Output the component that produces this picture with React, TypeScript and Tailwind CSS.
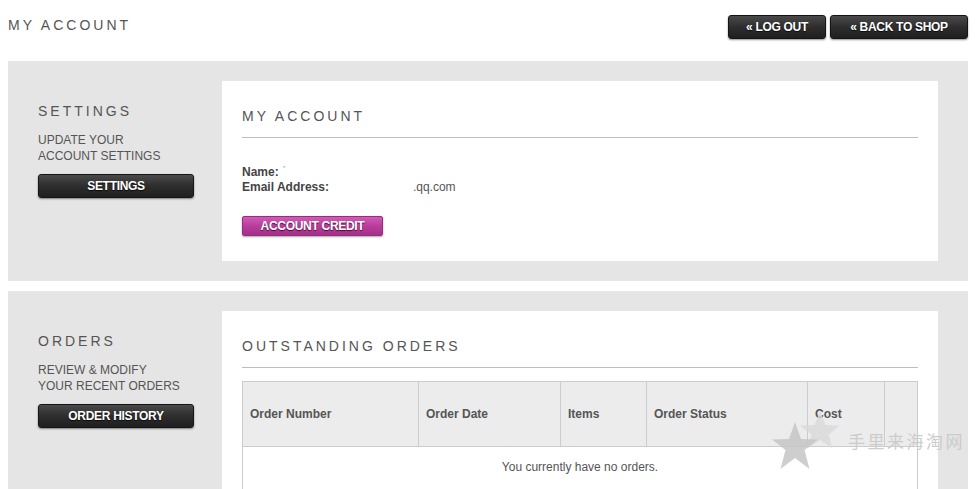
import React from "react";

const darkBtn =
  "h-[24px] flex items-center justify-center rounded-[3px] border border-[#151515] bg-gradient-to-b from-[#4a4a4a] via-[#2e2e2e] to-[#1f1f1f] shadow-[0_1px_2px_rgba(0,0,0,0.45)] text-white font-bold text-[12px] tracking-[-0.3px] [text-shadow:0_1px_1px_rgba(0,0,0,0.8)] [font-family:'Liberation_Sans',Arial,sans-serif]";

function SectionTitle({ children }: { children: React.ReactNode }) {
  return (
    <div className="text-[14px] leading-[16px] tracking-[3px] text-[#555]">
      {children}
    </div>
  );
}

function SideColumn({
  title,
  lines,
  button,
}: {
  title: string;
  lines: string[];
  button: string;
}) {
  return (
    <div className="w-[184px] shrink-0 pt-[22px]">
      <SectionTitle>{title}</SectionTitle>
      <div className="mt-[13px] text-[12px] leading-[16px] text-[#555]">
        {lines.map((l) => (
          <div key={l}>{l}</div>
        ))}
      </div>
      <button className={`${darkBtn} mt-[10px] w-[156px]`}>{button}</button>
    </div>
  );
}

function Watermark() {
  return (
    <div className="pointer-events-none absolute left-[770px] top-[408px] flex items-center">
      <svg width="76" height="70" viewBox="0 0 76 70">
        <polygon
          points="50,3 55.5,17 70,17.5 58.5,26.5 62.5,40.5 50,32 37.5,40.5 41.5,26.5 30,17.5 44.5,17"
          fill="#d9d9d9"
          opacity="0.8"
        />
        <polygon
          points="25,14 31,31 48,31.5 34.5,42 39.5,61 25,50 10.5,61 15.5,42 2,31.5 19,31"
          fill="#c6c6c6"
          opacity="0.85"
        />
      </svg>
      <span className="ml-[2px] -mt-[4px] text-[17px] tracking-[2.5px] text-[#cccccc] [font-family:'Noto_Sans_CJK_SC',serif]">
        手里来海淘网
      </span>
    </div>
  );
}

export default function App() {
  return (
    <div className="relative min-h-[489px] bg-white px-2 pt-[15px] text-[#444] [font-family:'Liberation_Sans',Arial,sans-serif]">
      {/* page header */}
      <div className="flex h-[46px] items-start justify-between">
        <div className="mt-[2px] text-[14px] leading-[16px] tracking-[3px] text-[#555]">
          MY ACCOUNT
        </div>
        <div className="flex gap-[4px]">
          <button className={`${darkBtn} w-[98px]`}>« LOG OUT</button>
          <button className={`${darkBtn} w-[138px]`}>« BACK TO SHOP</button>
        </div>
      </div>

      {/* settings panel */}
      <section className="flex bg-[#e5e5e5] px-[30px] py-5">
        <SideColumn
          title="SETTINGS"
          lines={["UPDATE YOUR", "ACCOUNT SETTINGS"]}
          button="SETTINGS"
        />
        <div className="flex-1 bg-white px-5 pb-[25px] pt-[27px]">
          <SectionTitle>MY ACCOUNT</SectionTitle>
          <div className="mt-[13px] h-px bg-[#bdbdbd]" />
          <div className="mt-[27px] text-[12px] leading-[15px] text-[#444]">
            <div>
              <span className="font-bold">Name:</span>{" "}
              <span className="text-[#aaa]">ˊ</span>
            </div>
            <div>
              <span className="font-bold">Email Address:</span>
              <span className="ml-[84px] text-[#555]">.qq.com</span>
            </div>
          </div>
          <button className="mt-[21px] flex h-[20px] w-[141px] items-center justify-center rounded-[2px] border border-[#9a2a82] bg-gradient-to-b from-[#cf5cb4] via-[#b93d9c] to-[#a52f89] text-[12px] font-bold tracking-[-0.3px] text-white shadow-[0_1px_2px_rgba(0,0,0,0.35)] [font-family:'Liberation_Sans',Arial,sans-serif] [text-shadow:0_1px_1px_rgba(0,0,0,0.7)]">
            ACCOUNT CREDIT
          </button>
        </div>
      </section>

      {/* orders panel */}
      <section className="mt-[10px] flex bg-[#e5e5e5] px-[30px] pb-5 pt-5">
        <SideColumn
          title="ORDERS"
          lines={["REVIEW & MODIFY", "YOUR RECENT ORDERS"]}
          button="ORDER HISTORY"
        />
        <div className="flex-1 bg-white px-5 pb-5 pt-[27px]">
          <SectionTitle>OUTSTANDING ORDERS</SectionTitle>
          <div className="mt-[13px] h-px bg-[#bdbdbd]" />
          <table className="mt-[13px] w-full border-collapse text-left text-[12px] text-[#555]">
            <thead>
              <tr className="h-[65px] bg-[#ececec] font-bold">
                <th className="w-[176px] border border-[#ccc] pb-[1px] pl-[7px]">Order Number</th>
                <th className="w-[142px] border border-[#ccc] pb-[1px] pl-[7px]">Order Date</th>
                <th className="w-[86px] border border-[#ccc] pb-[1px] pl-[7px]">Items</th>
                <th className="w-[161px] border border-[#ccc] pb-[1px] pl-[7px]">Order Status</th>
                <th className="w-[77px] border border-[#ccc] pb-[1px] pl-[7px]">Cost</th>
                <th className="border border-[#ccc]"></th>
              </tr>
            </thead>
            <tbody>
              <tr className="h-[50px]">
                <td colSpan={6} className="border border-[#ccc] pb-[10px] text-center font-normal text-[#555]">
                  You currently have no orders.
                </td>
              </tr>
            </tbody>
          </table>
        </div>
      </section>

      <Watermark />
    </div>
  );
}
